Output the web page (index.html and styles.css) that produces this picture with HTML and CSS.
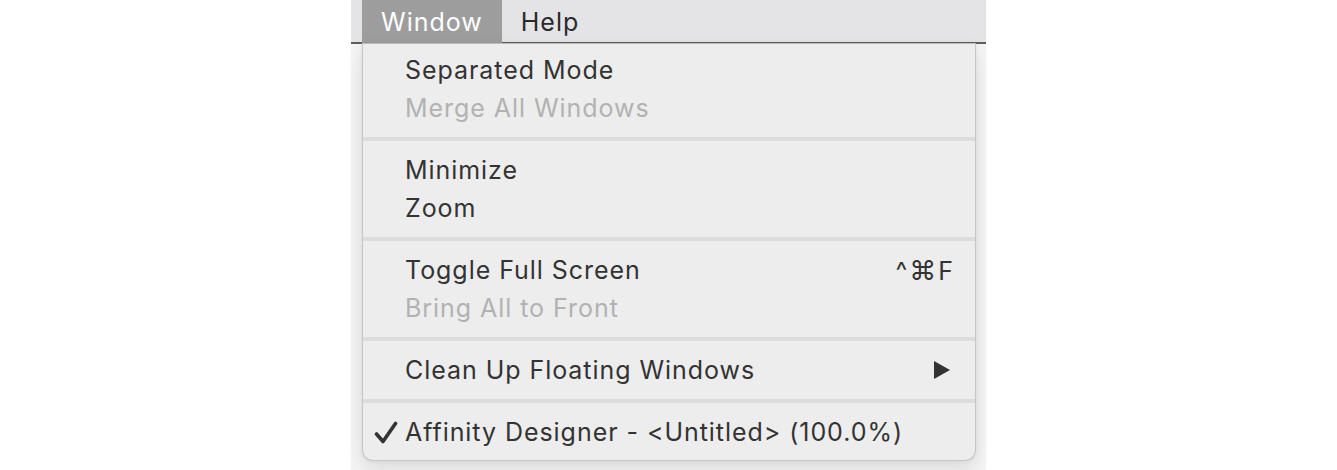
FILE: index.html
```html
<!DOCTYPE html>
<html>
<head>
<meta charset="utf-8">
<link rel="stylesheet" href="styles.css">
</head>
<body>
<div class="screen">
  <div class="menubar">
    <div class="mb-item active">Window</div>
    <div class="mb-item">Help</div>
  </div>
  <div class="backdrop"></div>
  <div class="menu">
    <div class="group">
      <div class="item">Separated Mode</div>
      <div class="item disabled">Merge All Windows</div>
    </div>
    <div class="sep"></div>
    <div class="group">
      <div class="item">Minimize</div>
      <div class="item">Zoom</div>
    </div>
    <div class="sep"></div>
    <div class="group">
      <div class="item"><span class="label">Toggle Full Screen</span><span class="shortcut">^<span class="cmd">⌘</span>F</span></div>
      <div class="item disabled">Bring All to Front</div>
    </div>
    <div class="sep"></div>
    <div class="group">
      <div class="item"><span class="label">Clean Up Floating Windows</span>
        <svg class="arrow" width="18" height="20" viewBox="0 0 18 20"><path d="M1 1 L17 10 L1 19 Z" fill="#333"/></svg>
      </div>
    </div>
    <div class="sep"></div>
    <div class="group">
      <div class="item"><svg class="check" width="24" height="24" viewBox="0 0 24 24"><path d="M2.5 13 L9 20.5 L21.5 2.5" fill="none" stroke="#333" stroke-width="3.6" stroke-linecap="round" stroke-linejoin="round"/></svg><span class="label">Affinity Designer - &lt;Untitled&gt; (100.0%)</span></div>
    </div>
  </div>
</div>
</body>
</html>
```

FILE: styles.css
```css
html, body {
  margin: 0;
  padding: 0;
  background: #ffffff;
}
body {
  width: 1337px;
  height: 470px;
  overflow: hidden;
  display: flex;
  justify-content: center;
  font-family: "Inter", "Open Sans", sans-serif;
}
.screen {
  position: relative;
  width: 635px;
  height: 470px;
  display: flex;
  flex-direction: column;
  background: #f3f3f3;
}
.menubar {
  height: 42px;
  background: #e4e4e6;
  border-bottom: 2px solid #5e5e5e;
  display: flex;
  padding-left: 11px;
}
.mb-item {
  font-size: 25px;
  color: #2a2a2a;
  padding: 0 19px 0 19px;
  display: flex;
  align-items: center;
  height: 44px;
  letter-spacing: 1px;
}
.mb-item.active {
  background: #9d9d9d;
  color: #ffffff;
}
.backdrop {
  flex: 1;
  background: #f4f4f4;
}
.menu {
  position: absolute;
  left: 11px;
  top: 43px;
  width: 612px;
  background: #ededed;
  border: 1px solid #c6c6c6;
  border-top: 1px solid #bcbcbc;
  border-radius: 0 0 11px 11px;
  box-shadow: 0 8px 18px rgba(0,0,0,0.10), 0 0 4px rgba(0,0,0,0.06);
  padding: 7px 0 9px 0;
  display: flex;
  flex-direction: column;
}
.group {
  display: flex;
  flex-direction: column;
}
.item {
  height: 38px;
  display: flex;
  align-items: center;
  padding-left: 42px;
  padding-right: 22px;
  font-size: 25px;
  color: #333333;
  position: relative;
  letter-spacing: 0.95px;
}
.item.disabled {
  color: #b2b2b2;
}
.label {
  flex: 1;
}
.shortcut {
  color: #333333;
  letter-spacing: 2px;
  margin-right: -2px;
}
.cmd {
  font-size: 27px;
  letter-spacing: 2px;
}
.arrow {
  margin-right: 2px;
  width: 18px;
  height: 20px;
}
.check {
  position: absolute;
  left: 11px;
  top: 8px;
}
.sep {
  height: 4px;
  background: #dcdcdc;
  margin: 10px 0;
}
```
